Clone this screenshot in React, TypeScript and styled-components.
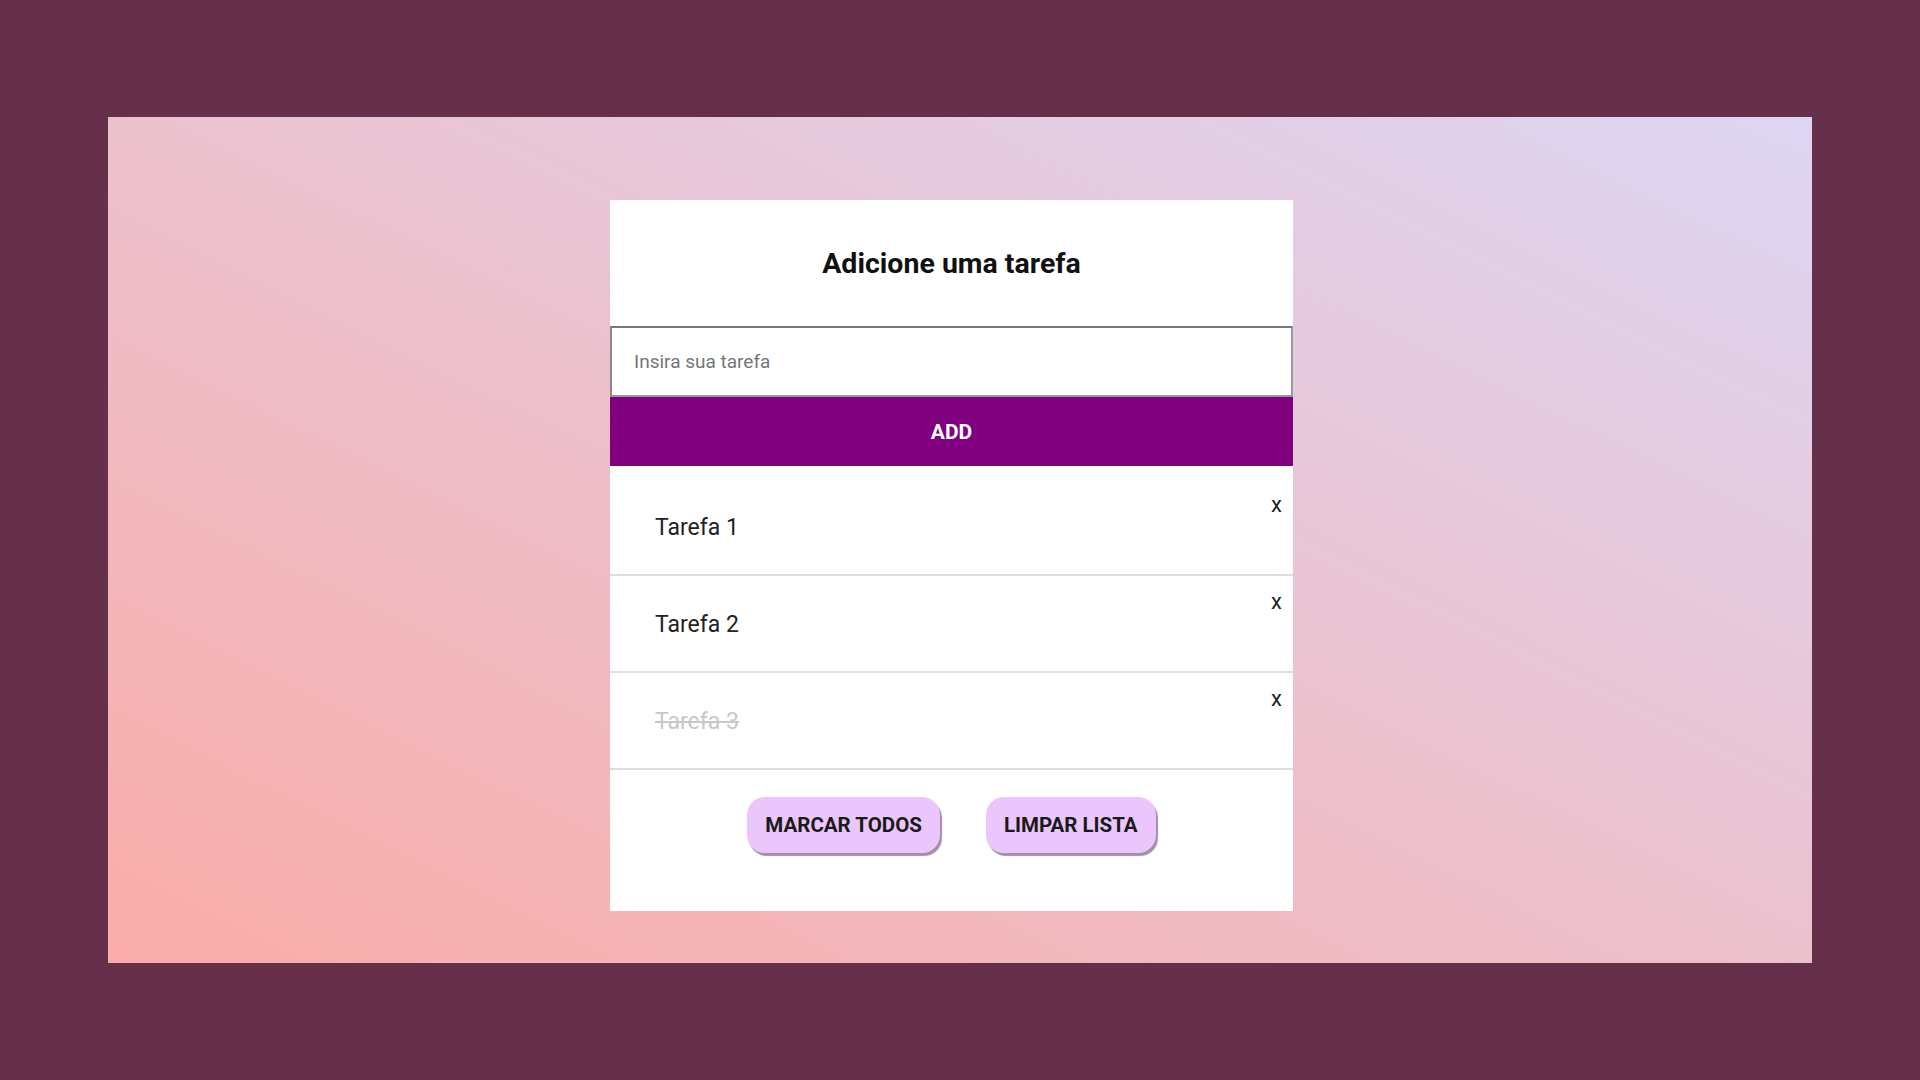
import React from "react";
import styled, { createGlobalStyle } from "styled-components";

const GlobalStyle = createGlobalStyle`
  html, body { margin: 0; padding: 0; }
  body {
    background: #66304a;
    font-family: Roboto, "Liberation Sans", Arial, sans-serif;
    width: 1920px;
    height: 1080px;
    overflow: hidden;
  }
  * { box-sizing: border-box; }
`;

const Page = styled.div`
  width: 1920px;
  height: 1080px;
  padding: 117px 108px;
`;

const Panel = styled.main`
  height: 846px;
  background: linear-gradient(to right top, #faaca8, #ddd6f3);
  display: flex;
  justify-content: center;
  align-items: flex-start;
  padding: 83px 17px 0 0;
`;

const Card = styled.section`
  width: 683px;
  height: 711px;
  background: #ffffff;
  display: flex;
  flex-direction: column;
`;

const Header = styled.header`
  height: 126px;
  display: flex;
  align-items: center;
  justify-content: center;
`;

const Title = styled.h2`
  margin: 0;
  font-size: 28.5px;
  font-weight: 700;
  color: #111;
`;

const Input = styled.input`
  height: 71px;
  width: 100%;
  flex-shrink: 0;
  border: 2px solid #999;
  border-top-color: #777;
  border-left-color: #888;
  padding: 0 0 0 22px;
  font-family: Roboto, "Liberation Sans", Arial, sans-serif;
  font-size: 19px;
  color: #333;
  outline: none;
  &::placeholder { color: #767676; }
`;

const AddButton = styled.button`
  height: 69px;
  width: 100%;
  flex-shrink: 0;
  border: none;
  background: #800080;
  color: #fff;
  font-family: Roboto, "Liberation Sans", Arial, sans-serif;
  font-weight: 700;
  font-size: 21px;
  cursor: pointer;
`;

const List = styled.ul`
  list-style: none;
  margin: 0;
  padding: 13px 0 0 0;
`;

const Item = styled.li`
  height: 97px;
  border-bottom: 2px solid #dedede;
  display: flex;
  justify-content: space-between;
  align-items: flex-start;
  padding: 0 9px 0 45px;
`;

const TaskText = styled.span<{ $done?: boolean }>`
  margin-top: 35px;
  font-size: 23px;
  color: ${(p) => (p.$done ? "#c8c8c8" : "#222")};
  text-decoration: ${(p) => (p.$done ? "line-through" : "none")};
`;

const Remove = styled.button`
  margin-top: 13px;
  border: none;
  background: none;
  padding: 0 2px;
  font-family: Roboto, "Liberation Sans", Arial, sans-serif;
  font-size: 22px;
  color: #222;
  cursor: pointer;
`;

const Actions = styled.div`
  display: flex;
  justify-content: center;
  gap: 46px;
  padding-top: 27px;
`;

const ActionButton = styled.button`
  height: 56px;
  padding: 0 18px;
  border: none;
  border-radius: 18px;
  background: #ebc6fc;
  box-shadow: 2px 3px 1px rgba(90, 50, 100, 0.55);
  font-family: Roboto, "Liberation Sans", Arial, sans-serif;
  font-weight: 700;
  font-size: 20.5px;
  color: #1a1a1a;
  cursor: pointer;
`;

const tasks = [
  { id: 1, text: "Tarefa 1", done: false },
  { id: 2, text: "Tarefa 2", done: false },
  { id: 3, text: "Tarefa 3", done: true },
];

export default function App() {
  return (
    <Page>
      <GlobalStyle />
      <Panel>
        <Card>
          <Header>
            <Title>Adicione uma tarefa</Title>
          </Header>
          <Input placeholder="Insira sua tarefa" />
          <AddButton>ADD</AddButton>
          <List>
            {tasks.map((t) => (
              <Item key={t.id}>
                <TaskText $done={t.done}>{t.text}</TaskText>
                <Remove>x</Remove>
              </Item>
            ))}
          </List>
          <Actions>
            <ActionButton>MARCAR TODOS</ActionButton>
            <ActionButton>LIMPAR LISTA</ActionButton>
          </Actions>
        </Card>
      </Panel>
    </Page>
  );
}
